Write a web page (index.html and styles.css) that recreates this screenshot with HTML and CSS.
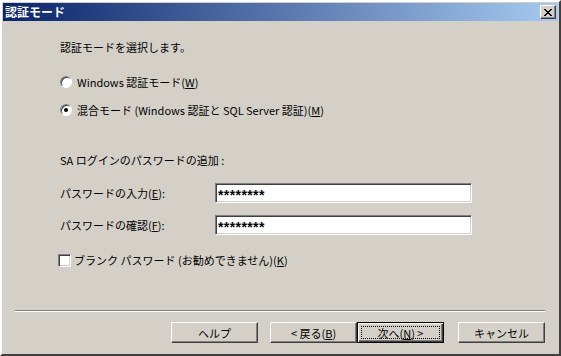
FILE: index.html
```html
<!DOCTYPE html>
<html lang="ja">
<head>
  <meta charset="UTF-8" />
  <title>認証モード</title>
  <link rel="stylesheet" href="styles.css">
</head>
<body>
  <div class="window">
    <div class="titlebar">
      <span class="title">認証モード</span>
      <span class="close-btn">
        <svg width="8" height="7" viewBox="0 0 8 7" shape-rendering="crispEdges">
          <path d="M0 0h2v1h-2zM6 0h2v1h-2zM1 1h2v1h-2zM5 1h2v1h-2zM2 2h4v1h-4zM3 3h2v1h-2zM2 4h4v1h-4zM1 5h2v1h-2zM5 5h2v1h-2zM0 6h2v1h-2zM6 6h2v1h-2z" fill="#000"/>
        </svg>
      </span>
    </div>

    <div class="content">
      <p class="intro">認証モードを選択します。</p>

      <div class="option">
        <span class="radio"></span>
        <span>Windows 認証モード(<u>W</u>)</span>
      </div>
      <div class="option option-second">
        <span class="radio checked"></span>
        <span>混合モード (Windows 認証と SQL Server 認証)(<u>M</u>)</span>
      </div>

      <p class="section">SA ログインのパスワードの追加 :</p>

      <div class="field">
        <span class="field-label">パスワードの入力(<u>E</u>):</span>
        <span class="textbox">********</span>
      </div>
      <div class="field field-second">
        <span class="field-label">パスワードの確認(<u>F</u>):</span>
        <span class="textbox">********</span>
      </div>

      <div class="check">
        <span class="checkbox"></span>
        <span>ブランク パスワード (お勧めできません)(<u>K</u>)</span>
      </div>
    </div>

    <div class="separator"></div>

    <div class="buttons">
      <span class="btn">ヘルプ</span>
      <span class="btn btn-back">&lt; 戻る(<u>B</u>)</span>
      <span class="btn btn-default"><span class="focus">次へ(<u>N</u>) &gt;</span></span>
      <span class="btn btn-cancel">キャンセル</span>
    </div>
  </div>
</body>
</html>
```

FILE: styles.css
```css
body {
  margin: 0;
  padding: 0;
  background-color: #d4d0c8;
  font-family: "MS UI Gothic", "Noto Sans CJK JP", sans-serif;
  font-size: 11px;
  color: #000;
}

.window {
  box-sizing: border-box;
  width: 561px;
  height: 356px;
  padding: 1px;
  border: 2px solid;
  border-color: #fff #404040 #404040 #fff;
  background-color: #d4d0c8;
  display: flex;
  flex-direction: column;
}

.titlebar {
  height: 18px;
  display: flex;
  align-items: center;
  justify-content: space-between;
  background: linear-gradient(to right, #0a246a, #a6caf0);
  padding: 0 2px;
}

.title {
  color: #fff;
  font-weight: bold;
  font-size: 12px;
  line-height: 18px;
}

.close-btn {
  box-sizing: border-box;
  width: 16px;
  height: 14px;
  display: flex;
  align-items: center;
  justify-content: center;
  background-color: #d4d0c8;
  border: 1px solid;
  border-color: #fff #404040 #404040 #fff;
  box-shadow: inset -1px -1px #808080;
}

.content {
  padding-left: 57px;
  display: flex;
  flex-direction: column;
}

.intro, .section {
  margin: 0;
  line-height: 16px;
}

.intro {
  margin-top: 18px;
}

.option {
  display: flex;
  align-items: center;
  gap: 5px;
  height: 16px;
  margin-top: 19px;
}

.option-second {
  margin-top: 12px;
}

.radio {
  box-sizing: border-box;
  width: 12px;
  height: 12px;
  border-radius: 50%;
  background-color: #fff;
  border: 1px solid;
  border-color: #808080 #fff #fff #808080;
  box-shadow: inset 1px 1px #404040;
  display: flex;
  align-items: center;
  justify-content: center;
}

.radio.checked::after {
  content: "";
  width: 4px;
  height: 4px;
  border-radius: 50%;
  background-color: #000;
}

.section {
  margin-top: 34px;
}

.field {
  display: flex;
  align-items: center;
  margin-top: 15px;
}

.field-second {
  margin-top: 12px;
}

.field-label {
  width: 155px;
}

.textbox {
  box-sizing: border-box;
  width: 257px;
  height: 20px;
  padding: 2px 2px 0;
  background-color: #fff;
  border: 1px solid;
  border-color: #808080 #fff #fff #808080;
  box-shadow: inset 1px 1px #404040, inset -1px -1px #d4d0c8;
  font-family: "Liberation Sans", sans-serif;
  font-weight: bold;
  font-size: 14px;
  letter-spacing: 0.4px;
  line-height: 18px;
}

.check {
  display: flex;
  align-items: center;
  gap: 3px;
  height: 16px;
  margin-top: 17px;
  margin-left: -2px;
}

.checkbox {
  box-sizing: border-box;
  width: 13px;
  height: 13px;
  background-color: #fff;
  border: 1px solid;
  border-color: #808080 #fff #fff #808080;
  box-shadow: inset 1px 1px #404040, inset -1px -1px #d4d0c8;
}

.separator {
  margin: auto 13px 0 12px;
  height: 1px;
  background-color: #808080;
  border-bottom: 1px solid #fff;
}

.buttons {
  display: flex;
  justify-content: flex-end;
  padding: 10px 13px 10px 0;
}

.btn {
  box-sizing: border-box;
  width: 87px;
  height: 21px;
  display: flex;
  align-items: center;
  justify-content: center;
  border: 1px solid;
  border-color: #fff #404040 #404040 #fff;
  box-shadow: inset -1px -1px #808080;
  background-color: #d4d0c8;
}

.btn-back {
  margin-left: 12px;
}

.btn-default {
  border: 1px solid #000;
  box-shadow: inset 1px 1px #fff, inset -1px -1px #404040, inset -2px -2px #808080;
}

.focus {
  box-sizing: border-box;
  width: 79px;
  height: 13px;
  display: flex;
  align-items: center;
  justify-content: center;
  border: 1px dotted #000;
}

.btn-cancel {
  margin-left: 14px;
}
```
